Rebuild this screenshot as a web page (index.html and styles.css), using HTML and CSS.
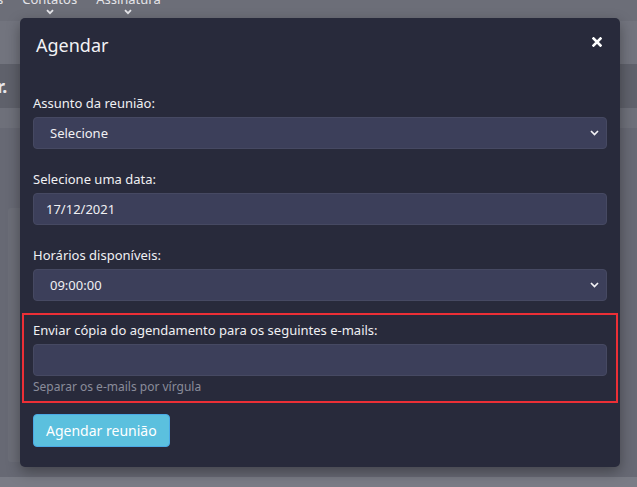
FILE: index.html
```html
<!DOCTYPE html>
<html lang="pt-BR">
<head>
<meta charset="utf-8">
<title>Agendar</title>
<link rel="stylesheet" href="styles.css">
</head>
<body>
<div class="page">
  <nav class="topnav">
    <span class="nav-item nav-cut">s</span>
    <span class="nav-item">Contatos
      <svg class="nav-chev" width="8" height="6" viewBox="0 0 8 6"><path d="M1 1.2 L4 4.2 L7 1.2" fill="none" stroke="#e6e6ea" stroke-width="1.8"/></svg>
    </span>
    <span class="nav-item">Assinatura
      <svg class="nav-chev" width="8" height="6" viewBox="0 0 8 6"><path d="M1 1.2 L4 4.2 L7 1.2" fill="none" stroke="#e6e6ea" stroke-width="1.8"/></svg>
    </span>
  </nav>
  <div class="band band-a"></div>
  <div class="band band-b"><span class="band-title">r.</span></div>
  <div class="band band-c"></div>
  <main class="main">
    <div class="card"></div>
  </main>
  <div class="footer-strip"></div>
</div>

<div class="modal">
  <div class="modal-header">
    <h4 class="modal-title">Agendar</h4>
    <button class="close" type="button" aria-label="Fechar">
      <svg width="10" height="10" viewBox="0 0 10 10"><path d="M1.5 1.5 L8.5 8.5 M8.5 1.5 L1.5 8.5" stroke="#ffffff" stroke-width="2.6" stroke-linecap="square"/></svg>
    </button>
  </div>
  <div class="modal-body">
    <div class="form-group">
      <label class="label">Assunto da reunião:</label>
      <div class="control select"><span class="select-text">Selecione</span>
        <svg class="chev" width="9" height="6" viewBox="0 0 9 6"><path d="M1 1 L4.5 4.5 L8 1" fill="none" stroke="#f2f2f5" stroke-width="1.7"/></svg>
      </div>
    </div>
    <div class="form-group">
      <label class="label">Selecione uma data:</label>
      <div class="control input"><span>17/12/2021</span></div>
    </div>
    <div class="form-group tight">
      <label class="label">Horários disponíveis:</label>
      <div class="control select"><span class="select-text">09:00:00</span>
        <svg class="chev" width="9" height="6" viewBox="0 0 9 6"><path d="M1 1 L4.5 4.5 L8 1" fill="none" stroke="#f2f2f5" stroke-width="1.7"/></svg>
      </div>
    </div>
    <div class="highlight">
      <label class="label">Enviar cópia do agendamento para os seguintes e-mails:</label>
      <div class="control input"></div>
      <p class="help">Separar os e-mails por vírgula</p>
    </div>
    <button class="btn" type="button">Agendar reunião</button>
  </div>
</div>
</body>
</html>
```
FILE: styles.css
```css
* { box-sizing: border-box; }
html, body { margin: 0; padding: 0; }
body {
  width: 637px;
  height: 487px;
  overflow: hidden;
  background: #676974;
  font-family: "Noto Sans", "Open Sans", sans-serif;
  position: relative;
}
.page { display: flex; flex-direction: column; height: 487px; }
.topnav {
  height: 21px;
  background: #6c6e78;
  display: flex;
  gap: 19px;
  align-items: flex-start;
  overflow: hidden;
}
.nav-item {
  position: relative;
  color: #e4e4e8;
  font-size: 13px;
  line-height: 14px;
  margin-top: -8px;
  display: flex;
  flex-direction: column;
  align-items: center;
}
.nav-cut { margin-left: -3px; }
.nav-chev { margin-top: 3px; }
.band-a { height: 43px; background: #72747e; }
.band-b { height: 44px; background: #5f616b; display: flex; align-items: center; }
.band-title { color: #e8e8ec; font-size: 18px; font-weight: 700; margin-left: -3px; margin-top: 0; }
.band-c { height: 20px; background: #6e707a; }
.main { flex: 1; padding: 80px 0 0 8px; }
.card { width: 40px; height: 254px; background: #6c6e78; border-radius: 3px; }
.footer-strip { height: 10px; background: #7a7c86; }

.modal {
  position: absolute;
  left: 20px;
  top: 18px;
  width: 600px;
  height: 449px;
  background: #282a3b;
  border-radius: 5px;
  box-shadow: 0 5px 14px rgba(0,0,0,0.35);
  color: #ececf0;
}
.modal-header {
  display: flex;
  justify-content: space-between;
  align-items: center;
  padding: 15px 16px 15px 16px;
}
.modal-title {
  margin: 0;
  font-size: 18px;
  line-height: 25px;
  font-weight: 400;
  color: #f2f2f5;
}
.close {
  background: none;
  border: 0;
  padding: 0;
  margin: 0 1px 8px 0;
  width: 12px;
  height: 12px;
  display: flex;
  align-items: center;
  justify-content: center;
}
.modal-body { padding: 20px 13px 20px 13px; }
.form-group { margin-bottom: 20px; }
.form-group.tight { margin-bottom: 12px; }
.label {
  display: block;
  font-size: 13px;
  line-height: 20px;
  margin-bottom: 4px;
  color: #f0f0f3;
}
.control {
  height: 32px;
  background: #3c3f5a;
  border: 1px solid #464962;
  border-radius: 4px;
  display: flex;
  align-items: center;
  font-size: 13px;
  color: #f0f0f3;
}
.select { padding: 0 7px 0 16px; justify-content: space-between; }
.input { padding: 0 12px; }
.highlight {
  border: 2px solid #ec2f36;
  margin: 0 -11px 11px -11px;
  padding: 5px 9px 6px 9px;
}
.help {
  margin: 2px 0 0 0;
  font-size: 12px;
  line-height: 17px;
  color: #8a8c9a;
}
.btn {
  height: 33px;
  padding: 0 12px;
  background: #5bc0de;
  border: 1px solid #4aa9e6;
  border-radius: 4px;
  color: #ffffff;
  font-family: "Noto Sans", "Open Sans", sans-serif;
  font-size: 14px;
}
```
